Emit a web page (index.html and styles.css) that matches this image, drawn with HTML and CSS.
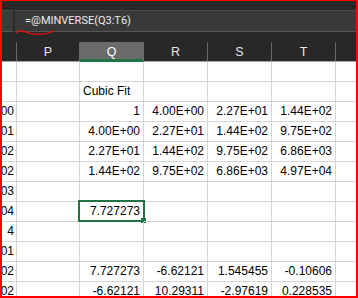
FILE: index.html
```html
<!DOCTYPE html>
<html>
<head>
<meta charset="utf-8">
<link rel="stylesheet" href="styles.css">
</head>
<body>
<div class="sheet">
  <div class="topbar"></div>
  <div class="formula-bar">
    <div class="namebox"></div>
    <div class="fx">=@MINVERSE(Q3:T6)</div>
  </div>
  <div class="gap"></div>
  <div class="grid">
    <div class="hd"></div><div class="hd">P</div><div class="hd active">Q</div><div class="hd">R</div><div class="hd">S</div><div class="hd">T</div><div class="hd last"></div>

    <div class="c"></div><div class="c"></div><div class="c"></div><div class="c"></div><div class="c"></div><div class="c"></div><div class="c last"></div>

    <div class="c"></div><div class="c"></div><div class="c t">Cubic Fit</div><div class="c"></div><div class="c"></div><div class="c"></div><div class="c last"></div>

    <div class="c n edge">00</div><div class="c"></div><div class="c n">1</div><div class="c n">4.00E+00</div><div class="c n">2.27E+01</div><div class="c n">1.44E+02</div><div class="c last"></div>

    <div class="c n edge">01</div><div class="c"></div><div class="c n">4.00E+00</div><div class="c n">2.27E+01</div><div class="c n">1.44E+02</div><div class="c n">9.75E+02</div><div class="c last"></div>

    <div class="c n edge">02</div><div class="c"></div><div class="c n">2.27E+01</div><div class="c n">1.44E+02</div><div class="c n">9.75E+02</div><div class="c n">6.86E+03</div><div class="c last"></div>

    <div class="c n edge">02</div><div class="c"></div><div class="c n">1.44E+02</div><div class="c n">9.75E+02</div><div class="c n">6.86E+03</div><div class="c n">4.97E+04</div><div class="c last"></div>

    <div class="c n edge">03</div><div class="c"></div><div class="c"></div><div class="c"></div><div class="c"></div><div class="c"></div><div class="c last"></div>

    <div class="c n edge">04</div><div class="c"></div><div class="c n selected">7.727273</div><div class="c"></div><div class="c"></div><div class="c"></div><div class="c last"></div>

    <div class="c n edge">4</div><div class="c"></div><div class="c"></div><div class="c"></div><div class="c"></div><div class="c"></div><div class="c last"></div>

    <div class="c n edge">01</div><div class="c"></div><div class="c"></div><div class="c"></div><div class="c"></div><div class="c"></div><div class="c last"></div>

    <div class="c n edge">02</div><div class="c"></div><div class="c n">7.727273</div><div class="c n">-6.62121</div><div class="c n">1.545455</div><div class="c n">-0.10606</div><div class="c last"></div>

    <div class="c n edge">02</div><div class="c"></div><div class="c n">-6.62121</div><div class="c n">10.29311</div><div class="c n">-2.97619</div><div class="c n">0.228535</div><div class="c last"></div>
  </div>
  <svg class="squiggle" width="60" height="40" viewBox="0 0 60 40">
    <path d="M16.5 32.5 Q18.5 30.5 21 31 Q27 32 33 34 Q44 35.5 53.5 31" fill="none" stroke="#e01010" stroke-width="1.3" stroke-linecap="round"/>
  </svg>
</div>
</body>
</html>
```
FILE: styles.css
```css
html, body {
  margin: 0;
  padding: 0;
  background: #ffffff;
}

.sheet {
  position: relative;
  width: 358px;
  height: 298px;
  overflow: hidden;
  background: #282828;
  font-family: "Liberation Sans", Arial, sans-serif;
}

.sheet::after {
  content: "";
  position: absolute;
  inset: 0;
  border-style: solid;
  border-color: #ff0000;
  border-width: 1px 2px 2px 2px;
  pointer-events: none;
}

.topbar {
  height: 10px;
  background: #282828;
}

.formula-bar {
  display: flex;
  height: 22px;
  box-sizing: border-box;
  background: #2a2a2a;
  gap: 2px;
}

.namebox {
  width: 13px;
  background: #3b3b3b;
  border-top: 1px solid #4a4a4a;
  border-bottom: 1px solid #555555;
}

.fx {
  flex: 1;
  background: #393939;
  border-top: 1px solid #4a4a4a;
  border-bottom: 1px solid #555555;
  color: #ececec;
  font-family: Roboto, "Liberation Sans", sans-serif;
  font-size: 11px;
  line-height: 20px;
  padding-left: 10px;
  box-sizing: border-box;
  white-space: nowrap;
}

.gap {
  height: 10px;
  background: #282828;
}

.grid {
  display: grid;
  grid-template-columns: 17px 63px 64px 64px 64px 64px 1fr;
  grid-auto-rows: 20px;
  background: #ffffff;
}

.hd {
  box-sizing: border-box;
  background: #282828;
  border-right: 1px solid #6a6a6a;
  border-bottom: 1px solid #a6a6a6;
  color: #e6e6e6;
  font-size: 12.5px;
  line-height: 20px;
  text-align: center;
}

.hd.active {
  background: #6a6a6a;
  color: #ffffff;
  border-bottom-color: #217346;
  box-shadow: inset 0 -2px 0 #217346;
}

.c {
  position: relative;
  box-sizing: border-box;
  display: flex;
  justify-content: flex-start;
  border-right: 1px solid #d4d4d4;
  border-bottom: 1px solid #d4d4d4;
  padding: 0 3px;
  color: #000000;
  font-size: 12px;
  line-height: 19px;
  white-space: nowrap;
  overflow: hidden;
}

.c.n {
  justify-content: flex-end;
}

.c.edge {
  padding: 0 2px 0 0;
}

.c.last,
.hd.last {
  border-right: none;
}

.c.selected {
  overflow: visible;
}

.c.selected::before {
  content: "";
  position: absolute;
  top: -2px;
  left: -2px;
  right: -2px;
  bottom: -1px;
  border: 2px solid #217346;
  pointer-events: none;
}

.c.selected::after {
  content: "";
  position: absolute;
  right: -3px;
  bottom: -2px;
  width: 5px;
  height: 5px;
  background: #217346;
  pointer-events: none;
}

.squiggle {
  position: absolute;
  left: 0;
  top: 0;
}
```
